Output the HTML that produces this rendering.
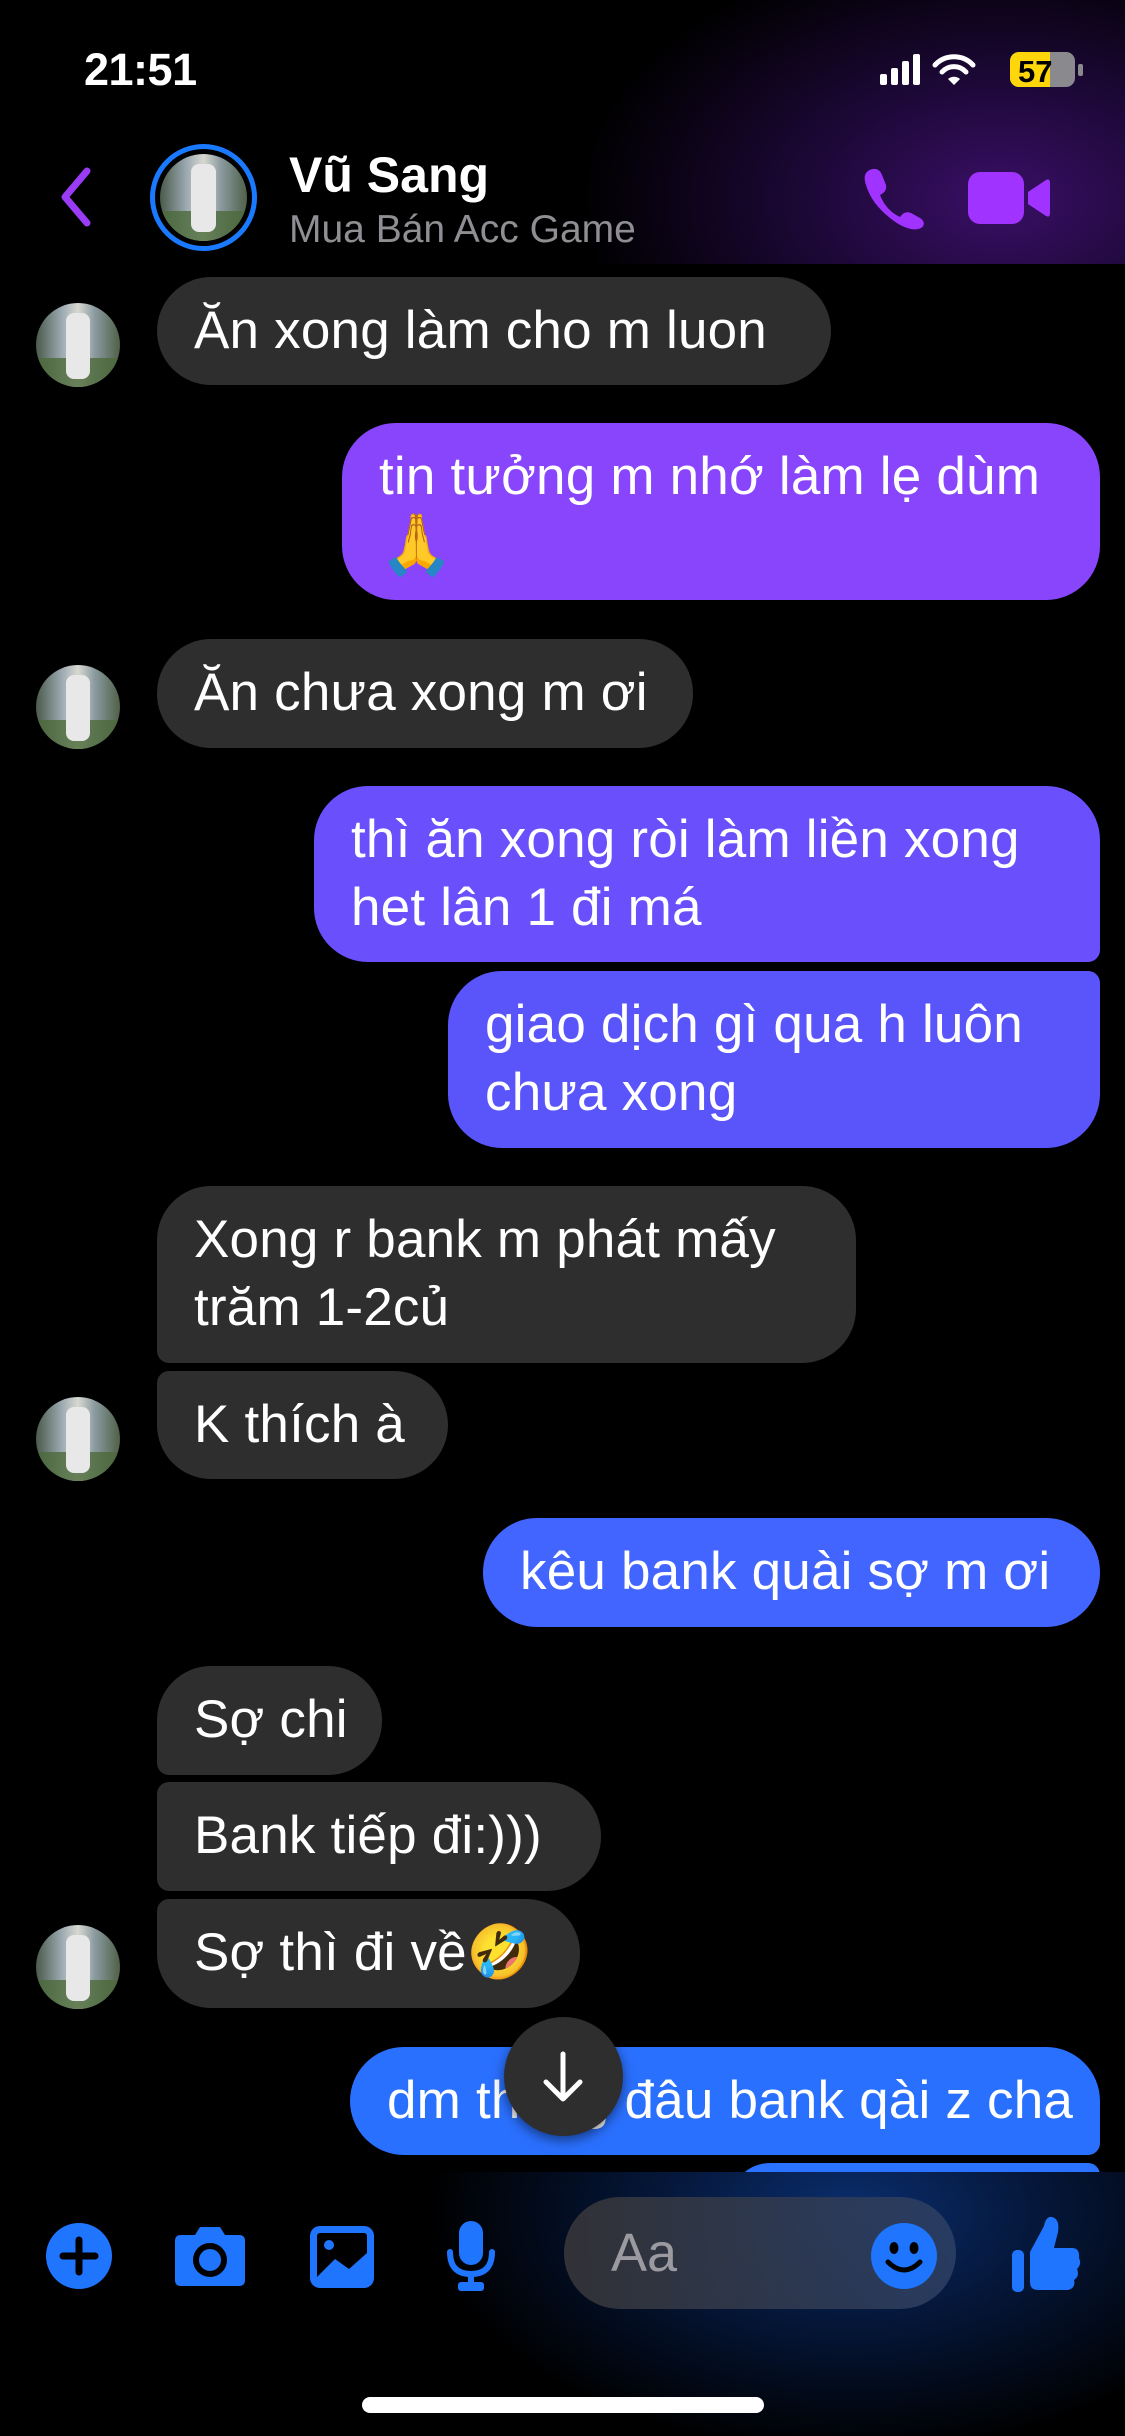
<!DOCTYPE html>
<html><head><meta charset="utf-8">
<style>
*{margin:0;padding:0;box-sizing:border-box}
html,body{width:1125px;height:2436px;background:#000;overflow:hidden}
body{position:relative;font-family:"Liberation Sans","DejaVu Sans",sans-serif;color:#fff}
.hdr{position:absolute;left:0;top:0;width:1125px;height:264px;background:radial-gradient(ellipse 420px 260px at 1000px 200px,#3a0f66 0%,#1d0838 45%,#000 100%),linear-gradient(#111,#000);}
.time{position:absolute;left:84px;top:44px;font-size:45px;font-weight:bold;letter-spacing:-0.5px}
.b{position:absolute;font-size:53px;line-height:68px;padding:20px 37px;border-radius:54px;white-space:nowrap;letter-spacing:0.2px}
.g{background:#2e2e2e}
.av{position:absolute;width:84px;height:84px;border-radius:50%;background:linear-gradient(90deg,#4a5a4a 0%,#9aa8b0 30%,#d8d8d0 50%,#8a9aa0 70%,#506048 100%);overflow:hidden}
.av:after{content:"";position:absolute;left:0;right:0;bottom:0;height:35%;background:#4c6a3a;opacity:.8}
.av:before{content:"";position:absolute;left:36%;top:12%;width:28%;height:78%;background:#e8e8e8;z-index:1;border-radius:8px}
</style></head><body>
<div class="hdr"></div>
<div class="time">21:51</div>
<svg style="position:absolute;left:880px;top:52px" width="210" height="36" viewBox="0 0 210 36">
<rect x="0" y="22" width="7" height="11" rx="2" fill="#fff"/>
<rect x="11" y="16" width="7" height="17" rx="2" fill="#fff"/>
<rect x="22" y="9" width="7" height="24" rx="2" fill="#fff"/>
<rect x="33" y="2" width="7" height="31" rx="2" fill="#fff"/>
<path d="M55 13 A26 26 0 0 1 93 13" stroke="#fff" stroke-width="5" fill="none" stroke-linecap="round"/>
<path d="M62 20 A16 16 0 0 1 86 20" stroke="#fff" stroke-width="5" fill="none" stroke-linecap="round"/>
<path d="M68 27 L74 33 L80 27 A9 9 0 0 0 68 27Z" fill="#fff"/>
<rect x="130" y="0" width="65" height="35" rx="9" fill="#8a8a8e"/>
<rect x="130" y="0" width="38" height="35" rx="9" fill="#ffd60a"/>
<rect x="160" y="0" width="10" height="35" fill="#ffd60a"/>
<rect x="198" y="12" width="5" height="12" rx="2" fill="#8a8a8e"/>
<text x="138" y="30" font-size="31" font-weight="bold" fill="#000" font-family="Liberation Sans">57</text>
</svg>
<svg style="position:absolute;left:55px;top:165px" width="40" height="65" viewBox="0 0 40 65"><path d="M32 6 L10 32 L32 58" stroke="#9a3cf6" stroke-width="7" fill="none" stroke-linecap="round" stroke-linejoin="round"/></svg>
<div style="position:absolute;left:150px;top:144px;width:107px;height:107px;border-radius:50%;border:5px solid #1a7aff;padding:5px;background:#000"><div class="av" style="position:relative;width:87px;height:87px"></div></div>
<div style="position:absolute;left:289px;top:146px;font-size:50px;font-weight:bold">Vũ Sang</div>
<div style="position:absolute;left:289px;top:208px;font-size:39px;color:#8e8e93">Mua Bán Acc Game</div>
<svg style="position:absolute;left:860px;top:165px" width="70" height="65" viewBox="0 0 70 65"><path d="M8 6 C14 2 20 4 22 10 L26 20 C27 25 24 28 20 30 C24 40 30 47 40 52 C43 48 46 46 51 48 L60 53 C65 56 65 61 61 63 C55 66 45 64 34 56 C20 46 10 34 6 20 C4 14 4 9 8 6Z" fill="#a033ff"/></svg>
<svg style="position:absolute;left:968px;top:172px" width="82" height="52" viewBox="0 0 82 52"><rect x="0" y="0" width="56" height="52" rx="12" fill="#a033ff"/><path d="M60 20 L78 8 Q82 6 82 11 L82 41 Q82 46 78 44 L60 32Z" fill="#a033ff"/></svg>

<div class="b g" style="left:157px;top:277px;width:674px;height:108px">Ăn xong làm cho m luon</div>
<div class="av" style="left:36px;top:303px"></div>

<div class="b" style="left:342px;top:423px;width:758px;height:177px;background:#8845fb">tin tưởng m nhớ làm lẹ dùm<br><span style="font-size:60px">🙏</span></div>

<div class="b g" style="left:157px;top:639px;width:536px;height:109px">Ăn chưa xong m ơi</div>
<div class="av" style="left:36px;top:665px"></div>

<div class="b" style="left:314px;top:786px;width:786px;height:176px;background:#6a4ffc;border-bottom-right-radius:12px">thì ăn xong ròi làm liền xong<br>het lân 1 đi má</div>
<div class="b" style="left:448px;top:971px;width:652px;height:177px;background:#5a55fb;border-top-right-radius:12px">giao dịch gì qua h luôn<br>chưa xong</div>

<div class="b g" style="left:157px;top:1186px;width:699px;height:177px;border-bottom-left-radius:12px">Xong r bank m phát mấy<br>trăm 1-2củ</div>
<div class="b g" style="left:157px;top:1371px;width:291px;height:108px;border-top-left-radius:12px">K thích à</div>
<div class="av" style="left:36px;top:1397px"></div>

<div class="b" style="left:483px;top:1518px;width:617px;height:109px;background:#4265ff">kêu bank quài sợ m ơi</div>

<div class="b g" style="left:157px;top:1666px;width:225px;height:109px;border-bottom-left-radius:12px">Sợ chi</div>
<div class="b g" style="left:157px;top:1782px;width:444px;height:109px;border-radius:12px 54px 54px 12px">Bank tiếp đi:)))</div>
<div class="b g" style="left:157px;top:1899px;width:423px;height:109px;border-top-left-radius:12px">Sợ thì đi về🤣</div>
<div class="av" style="left:36px;top:1925px"></div>

<div class="b" style="left:350px;top:2047px;width:750px;height:108px;background:#2a70ff;border-bottom-right-radius:12px">dm thằng đâu bank qài z cha</div>
<div style="position:absolute;left:730px;top:2163px;width:370px;height:40px;background:#2a72ff;border-radius:40px 12px 0 0"></div>

<div style="position:absolute;left:504px;top:2017px;width:119px;height:119px;border-radius:50%;background:#2e2e2e;box-shadow:0 4px 12px rgba(0,0,0,.5)"></div>
<svg style="position:absolute;left:538px;top:2050px" width="50" height="54" viewBox="0 0 50 54"><path d="M25 4 V48 M8 32 L25 49 L42 32" stroke="#fff" stroke-width="5" fill="none" stroke-linecap="round" stroke-linejoin="round"/></svg>

<div style="position:absolute;left:0;top:2172px;width:1125px;height:264px;background:radial-gradient(ellipse 420px 240px at 850px 40px,#0a2e6e 0%,#05173a 45%,#000 100%),linear-gradient(#000,#0c0c0c)"></div>
<svg style="position:absolute;left:45px;top:2222px" width="68" height="68" viewBox="0 0 68 68"><circle cx="34" cy="34" r="33" fill="#1f75fe"/><path d="M34 18 V50 M18 34 H50" stroke="#000" stroke-width="7" stroke-linecap="round"/></svg>
<svg style="position:absolute;left:173px;top:2225px" width="74" height="62" viewBox="0 0 74 62"><path d="M8 10 H22 L27 2 H47 L52 10 H66 Q72 10 72 16 V55 Q72 61 66 61 H8 Q2 61 2 55 V16 Q2 10 8 10Z" fill="#1f75fe"/><circle cx="37" cy="35" r="14" fill="none" stroke="#000" stroke-width="6"/></svg>
<svg style="position:absolute;left:309px;top:2225px" width="66" height="64" viewBox="0 0 66 64"><rect x="1" y="1" width="64" height="62" rx="10" fill="#1f75fe"/><rect x="8" y="8" width="50" height="48" rx="3" fill="#000"/><path d="M8 52 L26 34 L40 44 L58 28 V56 H8Z" fill="#1f75fe"/><circle cx="20" cy="20" r="5" fill="#1f75fe"/></svg>
<svg style="position:absolute;left:446px;top:2220px" width="50" height="72" viewBox="0 0 50 72"><rect x="13" y="1" width="24" height="44" rx="12" fill="#1f75fe"/><path d="M4 32 Q4 54 25 54 Q46 54 46 32" stroke="#1f75fe" stroke-width="6" fill="none" stroke-linecap="round"/><rect x="22" y="52" width="6" height="12" fill="#1f75fe"/><rect x="12" y="62" width="26" height="9" rx="3" fill="#1f75fe"/></svg>
<div style="position:absolute;left:564px;top:2197px;width:392px;height:112px;border-radius:56px;background:linear-gradient(90deg,rgba(52,52,56,.95),rgba(46,64,100,.85))"></div>
<div style="position:absolute;left:611px;top:2222px;font-size:54px;color:#9a9aa0">Aa</div>
<svg style="position:absolute;left:870px;top:2222px" width="68" height="68" viewBox="0 0 68 68"><circle cx="34" cy="34" r="33" fill="#1f75fe"/><ellipse cx="24" cy="26" rx="4.5" ry="6" fill="#000"/><ellipse cx="44" cy="26" rx="4.5" ry="6" fill="#000"/><path d="M18 40 Q34 56 50 40" stroke="#000" stroke-width="5" fill="none" stroke-linecap="round"/></svg>
<svg style="position:absolute;left:1010px;top:2214px" width="72" height="80" viewBox="0 0 72 80"><rect x="2" y="36" width="12" height="42" rx="5" fill="#1f75fe"/><path d="M20 38 L34 12 Q36 2 42 3 Q50 5 48 18 L44 34 H62 Q70 34 69 44 Q72 50 67 55 Q70 62 64 66 Q66 74 58 76 H28 Q20 76 20 68Z" fill="#1f75fe"/></svg>
<div style="position:absolute;left:362px;top:2397px;width:402px;height:16px;border-radius:8px;background:#fff"></div>
</body></html>
